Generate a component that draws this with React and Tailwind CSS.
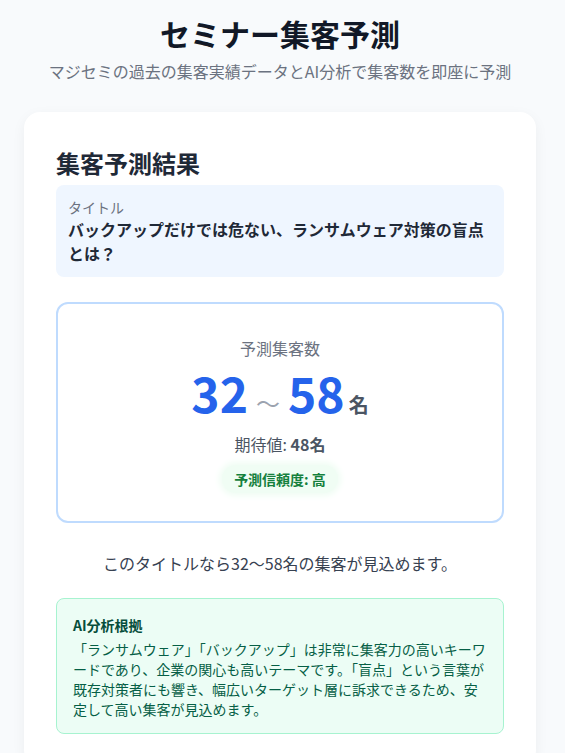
import React from 'react';

const jp = { fontFamily: '"Noto Sans CJK JP", "Noto Sans", sans-serif' };

export default function App() {
  return (
    <div className="min-h-screen bg-[#f8fafc] pt-[15px]" style={jp}>
      <div className="ml-6 w-[512px]">
        <h1 className="text-center text-[30px] font-bold leading-[36px] text-[#111827]">セミナー集客予測</h1>
        <p className="mt-[8px] text-center text-[16px] leading-[24px] text-[#6b7280]">
          マジセミの過去の集客実績データとAI分析で集客数を即座に予測
        </p>

        <div className="mt-[29px] rounded-2xl bg-white px-8 pt-[35px] pb-8 shadow-[0_4px_14px_rgba(15,23,42,0.05)]">
          <h2 className="text-[24px] font-bold leading-[32px] text-[#1f2937]">集客予測結果</h2>

          {/* title */}
          <div className="mt-[6px] rounded-lg bg-[#eff6ff] p-3">
            <div className="text-[14px] leading-[20px] text-[#6b7280]">タイトル</div>
            <div className="text-[16px] font-bold leading-[24px] text-[#1f2937]">
              バックアップだけでは危ない、ランサムウェア対策の盲点とは？
            </div>
          </div>

          {/* prediction */}
          <div className="mt-[25px] flex flex-col items-center rounded-xl border-2 border-[#bfdbfe] bg-white pt-8 pb-[28px]">
            <div className="text-[16px] leading-[24px] text-[#6b7280]">予測集客数</div>
            <div className="mt-2 flex items-baseline">
              <span className="text-[48px] font-bold leading-[48px] text-[#2563eb]">32</span>
              <span className="mx-2 text-[24px] leading-[24px] text-[#9ca3af]">〜</span>
              <span className="text-[48px] font-bold leading-[48px] text-[#2563eb]">58</span>
              <span className="ml-1 text-[20px] font-bold leading-[24px] text-[#4b5563]">名</span>
            </div>
            <div className="mt-[15px] text-[16px] leading-[24px] text-[#4b5563]">
              期待値: <span className="font-bold">48名</span>
            </div>
            <div className="mt-[9px] rounded-full bg-[#f0fdf4] px-3 py-1 text-[14px] font-semibold leading-[20px] text-[#15803d] shadow-[0_0_6px_3px_#f0fdf4]">
              予測信頼度: 高
            </div>
          </div>

          <p className="mt-[28px] text-center text-[16px] leading-[24px] text-[#374151]">
            このタイトルなら32〜58名の集客が見込めます。
          </p>

          {/* reasoning */}
          <div className="mt-[23px] rounded-lg border border-[#a7f3d0] bg-[#ecfdf5] px-4 pt-4 pb-[14px]">
            <div className="text-[14px] font-bold leading-[20px] text-[#064e3b]">AI分析根拠</div>
            <p className="mt-1 text-[14px] leading-[20px] text-[#065f46]">
              「ランサムウェア」「バックアップ」は非常に集客力の高いキーワードであり、企業の関心も高いテーマです。「盲点」という言葉が既存対策者にも響き、幅広いターゲット層に訴求できるため、安定して高い集客が見込めます。
            </p>
          </div>
        </div>
      </div>
    </div>
  );
}
